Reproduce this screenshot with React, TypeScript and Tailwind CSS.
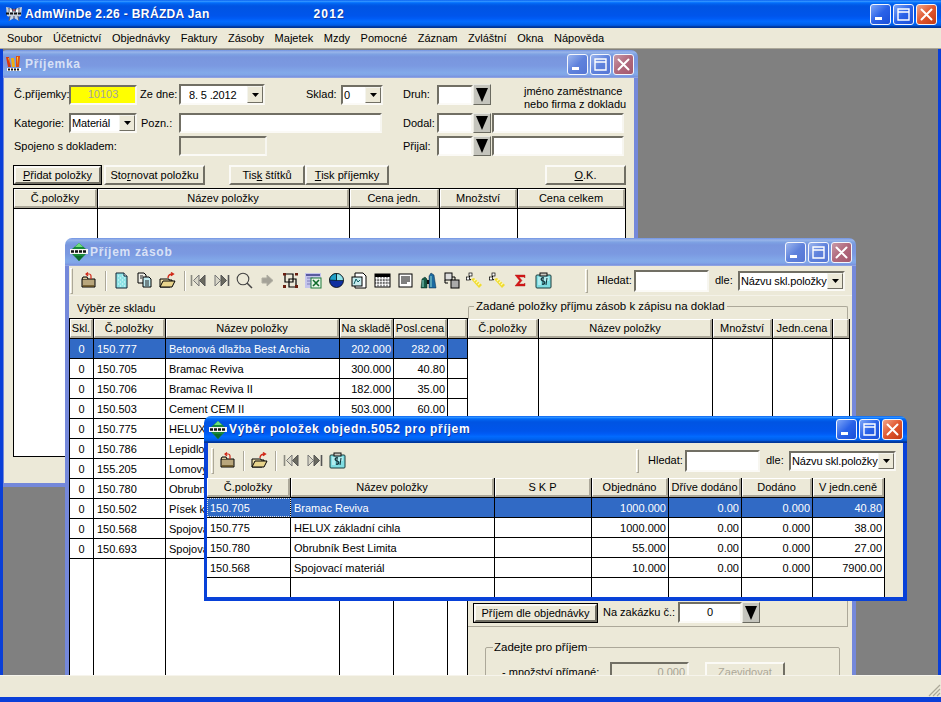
import React from "react";

const SUNKEN = "border-2 border-t-[#716f64] border-l-[#716f64] border-r-[#f7f6f0] border-b-[#fbfaf6]";
const RAISED = "border-2 border-t-[#fbfaf6] border-l-[#fbfaf6] border-r-[#716f64] border-b-[#716f64]";
const ACTIVE_TITLE = "bg-[linear-gradient(to_bottom,#0058ee_0%,#3593ff_4%,#288eff_6%,#127dff_8%,#036ffc_10%,#0262ee_14%,#0057e5_20%,#0054e3_24%,#0055eb_56%,#005bf5_66%,#026afe_76%,#0062ef_86%,#0052d6_92%,#0040ab_94%,#003092_100%)]";
const INACTIVE_TITLE = "bg-[linear-gradient(to_bottom,#7697e7_0%,#7e9ee3_3%,#94afe8_6%,#97b4e9_8%,#82a5e4_14%,#7c9fe2_17%,#7996de_25%,#7b99e1_56%,#82a9e9_81%,#80a5e7_89%,#7b96e1_94%,#7a93df_97%,#abbae3_100%)]";

function WinBtn({ kind, active }: { kind: "min" | "max" | "close"; active: boolean }) {
  const bg =
    kind === "close"
      ? active
        ? "bg-[linear-gradient(135deg,#f2a58a,#e0562e_50%,#c23a14)]"
        : "bg-[linear-gradient(135deg,#c89aa8,#b0687c_50%,#a4586e)]"
      : active
        ? "bg-[linear-gradient(135deg,#7da6f8,#2a62e8_50%,#1a4fd8)]"
        : "bg-[linear-gradient(135deg,#9cb6ee,#5f82dc_50%,#5676d4)]";
  return (
    <div className={`w-[21px] h-[21px] rounded-[3px] border border-[#f4f6fc] flex items-center justify-center ${bg}`}>
      <svg width="15" height="15" viewBox="0 0 15 15">
        {kind === "min" && <rect x="2" y="10" width="7" height="3" fill="#fff" />}
        {kind === "max" && (
          <path d="M2 2h11v11H2z M2 2v3h11V2" fill="none" stroke="#fff" strokeWidth="1.4" />
        )}
        {kind === "close" && (
          <path d="M2.5 2.5l10 10M12.5 2.5l-10 10" stroke="#fff" strokeWidth="2" strokeLinecap="round" />
        )}
      </svg>
    </div>
  );
}

function WinBtns({ active }: { active: boolean }) {
  return (
    <div className="ml-auto flex gap-[2px] mr-[4px]">
      <WinBtn kind="min" active={active} />
      <WinBtn kind="max" active={active} />
      <WinBtn kind="close" active={active} />
    </div>
  );
}

function AdmIcon() {
  return (
    <svg width="18" height="18" viewBox="0 0 18 18">
      <path d="M1 2l5 1 3 3 3-3 5-1-1 9-3 1 1 4-5-3-5 3 1-4-3-1z" fill="#c8d0dc" />
      <path d="M3 4l4 1 1 2H3zM15 4l-4 1-1 2h5z" fill="#ffffff" />
      <path d="M4 3v4M7 3l1 4M14 3v4M11 3l-1 4" stroke="#30384a" strokeWidth="0.9" />
      <path d="M1 8.5h16" stroke="#111" strokeWidth="2" strokeDasharray="3 1" />
      <path d="M5 11l-1 5M13 11l1 5M9 11v4" stroke="#566080" strokeWidth="1.2" />
      <circle cx="9" cy="5" r="1" fill="#c84040" />
    </svg>
  );
}

function ReceiptIcon() {
  return (
    <svg width="18" height="18" viewBox="0 0 18 18">
      <path d="M1 2h3l2 10h-3z" fill="#d83810" />
      <path d="M6 3h3l1 9H7z" fill="#f0b010" />
      <path d="M11 1h4l-1 11h-3z" fill="#e05010" />
      <path d="M12 2h1l-1 8z" fill="#f8e040" />
      <path d="M3 3h1l1 6z" fill="#f8c020" />
      <rect x="2" y="13" width="14" height="3" fill="#fff" />
      <path d="M3 14.5h12" stroke="#111" strokeWidth="1.8" strokeDasharray="2 1" />
    </svg>
  );
}

function GreenIcon() {
  return (
    <svg width="18" height="18" viewBox="0 0 18 18">
      <path d="M9 0l7 6v5l-7 7-7-7V6z" fill="#18883a" />
      <path d="M9 0l4 4H5z" fill="#6ee07c" />
      <path d="M9 18l4-5H5z" fill="#0c6a2c" />
      <rect x="0" y="6" width="18" height="5" fill="#f6f6f2" />
      <path d="M1 8.5h16" stroke="#111" strokeWidth="2.6" strokeDasharray="3 1" />
    </svg>
  );
}

function Title({ text, active, icon, main }: { text: string; active: boolean; icon: React.ReactNode; main?: boolean }) {
  return (
    <div className="flex items-center shrink-0 h-full pl-[5px]">
      {icon}
      <span className={`ml-[2px] font-bold text-[12px] whitespace-pre ${main ? "tracking-[0.35px]" : "tracking-[0.7px]"} ${active ? "text-white [text-shadow:1px_1px_0_#0f3fa8]" : "text-[#d8e1f6]"}`}>
        {text}
      </span>
    </div>
  );
}

function Win({
  pos,
  title,
  active,
  icon,
  titleH,
  children,
}: {
  pos: string;
  title: string;
  active: boolean;
  icon: React.ReactNode;
  titleH: string;
  children: React.ReactNode;
}) {
  return (
    <div className={`absolute flex flex-col rounded-t-[7px] overflow-hidden ${pos}`}>
      <div className={`${titleH} shrink-0 flex items-center ${active ? ACTIVE_TITLE : INACTIVE_TITLE}`}>
        <Title text={title} active={active} icon={icon} />
        <WinBtns active={active} />
      </div>
      <div className={`flex-1 min-h-0 bg-[#ece9d8] border-x-[4px] border-b-[4px] ${active ? "border-[#0841d8]" : "border-[#7488da]"}`}>
        {children}
      </div>
    </div>
  );
}

function Tri({ w, h }: { w: number; h: number }) {
  return (
    <svg width={w} height={h} viewBox="0 0 10 10" preserveAspectRatio="none">
      <polygon points="0,0 10,0 5,10" fill="#000" />
    </svg>
  );
}

function Combo({ w, h, text, align }: { w: string; h: string; text: string; align?: string }) {
  return (
    <div className={`${w} ${h} ${SUNKEN} bg-white flex items-center shrink-0`}>
      <span className={`flex-1 min-w-0 whitespace-nowrap overflow-hidden pl-[1px] pt-[1px] tracking-[-0.15px] ${align ?? ""}`}>{text}</span>
      <div className="w-[16px] h-full bg-[#ece9d8] border border-t-[#f4f4ee] border-l-[#f4f4ee] border-r-[#716f64] border-b-[#716f64] flex items-center justify-center shrink-0">
        <Tri w={7} h={4} />
      </div>
    </div>
  );
}

function Dropper({ h }: { h: string }) {
  return (
    <div className={`w-[18px] ${h} shrink-0 bg-[#c4c4bc] border border-t-[#e8e8e0] border-l-[#e8e8e0] border-r-[#6a6a60] border-b-[#6a6a60] flex items-center justify-center`}>
      <Tri w={12} h={14} />
    </div>
  );
}

function Inp({ cls, children }: { cls: string; children?: React.ReactNode }) {
  return <div className={`${SUNKEN} shrink-0 flex items-center ${cls}`}>{children}</div>;
}

function Btn({ cls, children, def }: { cls: string; children: React.ReactNode; def?: boolean }) {
  return (
    <div className={`h-[20px] shrink-0 flex items-center justify-center bg-[#ece9d8] ${def ? "border border-black" : ""} ${cls}`}>
      <div className={`w-full h-full flex items-center justify-center pt-[1px] ${RAISED}`}>{children}</div>
    </div>
  );
}

type Cell = { t: string; a?: "l" | "r" | "c" };

function Grid({
  cols,
  headers,
  rows,
  selected,
  cls,
  focusFirst,
}: {
  cols: string;
  headers: string[];
  rows: Cell[][];
  selected?: number;
  cls: string;
  focusFirst?: boolean;
}) {
  return (
    <div className={`flex flex-col overflow-hidden ${cls}`}>
      <div className={`grid ${cols} h-[20px] shrink-0 border-b border-black bg-[#ece9d8]`}>
        {headers.map((h, i) => (
          <div key={i} className="flex items-center justify-center whitespace-nowrap overflow-hidden border-r border-black">
            <div className="w-full h-full flex items-center justify-center pt-[1px] border-t border-l border-t-[#fff] border-l-[#fff] border-b-2 border-r-2 border-b-[#aca899] border-r-[#aca899]">
              {h}
            </div>
          </div>
        ))}
      </div>
      {rows.map((r, ri) => (
        <div
          key={ri}
          className={`grid ${cols} h-[20px] shrink-0 border-b border-black ${selected === ri ? "bg-[#316ac5] text-white" : "bg-white text-black"}`}
        >
          {r.map((c, ci) => (
            <div
              key={ci}
              className={`flex items-center whitespace-nowrap overflow-hidden border-r border-black pt-[1px] px-[3px] ${c.a === "r" ? "justify-end pr-[2px]" : c.a === "c" ? "justify-center" : "justify-start"} ${focusFirst && selected === ri && ci === 0 ? "outline-1 -outline-offset-1 outline-dotted outline-[#e4e4e4]" : ""}`}
            >
              {c.t}
            </div>
          ))}
        </div>
      ))}
      <div className={`grid ${cols} flex-1 min-h-0 bg-white`}>
        {headers.map((_, i) => (
          <div key={i} className="border-r border-black" />
        ))}
      </div>
    </div>
  );
}

/* ---------- toolbar icons ---------- */
const I = ({ children }: { children: React.ReactNode }) => (
  <div className="w-[23px] h-[20px] flex items-center justify-center shrink-0">
    <svg width="17" height="17" viewBox="0 0 17 17">
      {children}
    </svg>
  </div>
);
const Sep = ({ cls }: { cls: string }) => <div className={`w-[1px] h-[20px] bg-[#aca899] shrink-0 shadow-[1px_0_0_#fff] ${cls}`} />;
const Gripper = ({ cls }: { cls: string }) => (
  <div className={`w-[3px] shrink-0 bg-[#ece9d8] border border-t-[#fff] border-l-[#fff] border-r-[#aca899] border-b-[#aca899] ${cls}`} />
);

const IcBack = () => (
  <I>
    <path d="M2 7h13v8H2z" fill="#b8a67c" stroke="#000" />
    <path d="M2 7l1-2h4l1 2" fill="#d8c99c" stroke="#000" />
    <path d="M3 14h11" stroke="#5d4a1c" strokeWidth="1.4" />
    <path d="M11 7V4a2 2 0 0 0-2-2H6m2-1.5L6 2l2 2" fill="none" stroke="#d02818" strokeWidth="1.2" />
  </I>
);
const IcPage = () => (
  <I>
    <path d="M3 1h8l3 3v12H3z" fill="#8fe3e6" stroke="#123" />
    <path d="M11 1v3h3" fill="#fff" stroke="#123" />
    <path d="M5 4h1M7 6h1M9 4h1M5 8h1M9 8h1M7 10h1M11 6h1M11 10h1M5 12h1M9 12h1M7 14h1M11 14h1" stroke="#e6fbfb" />
  </I>
);
const IcCopy = () => (
  <I>
    <path d="M2 1h6l2 2v8H2z" fill="#f0f0e8" stroke="#000" />
    <path d="M7 5h6l2 2v8H7z" fill="#bfe9ee" stroke="#000" />
    <path d="M4 4h3M4 6h2M9 9h4M9 11h4M9 13h4" stroke="#222" />
  </I>
);
const IcOpen = () => (
  <I>
    <path d="M1 7h9v1h3v1L11 15H1z" fill="#f0e2ae" stroke="#000" />
    <path d="M1 15l3-6h12l-3 6z" fill="#e8d48c" stroke="#000" />
    <path d="M9 6c0-3 2-4 5-4m-2-1.5L14.5 2 12 3.8" fill="none" stroke="#d02818" strokeWidth="1.3" />
  </I>
);
const IcFirst = () => (
  <I>
    <path d="M1.5 3v11" stroke="#8a8a80" strokeWidth="1.6" />
    <path d="M9 3L3.5 8.5 9 14z" fill="#d8d6c8" stroke="#777" strokeWidth="1" />
    <path d="M15 3L9.5 8.5 15 14z" fill="#6a6a60" stroke="#555" />
  </I>
);
const IcLast = () => (
  <I>
    <path d="M2 3l5.5 5.5L2 14z" fill="#d8d6c8" stroke="#777" strokeWidth="1" />
    <path d="M8 3l5.5 5.5L8 14z" fill="#6a6a60" stroke="#555" />
    <path d="M15.5 3v11" stroke="#555" strokeWidth="1.6" />
  </I>
);
const IcSearch = () => (
  <I>
    <circle cx="7" cy="7" r="5.8" fill="none" stroke="#444" strokeWidth="1.1" />
    <path d="M11 11l5 5" stroke="#444" strokeWidth="1.5" />
  </I>
);
const IcArrow = () => (
  <I>
    <path d="M3 6h5V3l6 5.5L8 14v-3H3z" fill="#a4a298" stroke="#b0aea2" />
  </I>
);
const IcFrame = () => (
  <I>
    <path d="M3 2h8v8H3zM7 7h7v8H7z" fill="none" stroke="#000" strokeWidth="1.2" />
    <path d="M1 1h3v2.5H1zM13 1h3v2.5h-3zM1 13h3v3H1zM13 13h3v3h-3z" fill="#6a1f10" />
  </I>
);
const IcExcel = () => (
  <I>
    <rect x="0" y="1" width="16" height="15" fill="#c4c4ec" />
    <rect x="1" y="2" width="14" height="2" fill="#5a5aa0" />
    <path d="M2 6h6M2 9h4M2 12h4" stroke="#7a7ab8" />
    <rect x="6" y="6" width="10" height="10" fill="#e8f4e8" stroke="#1f7a3a" />
    <path d="M8 8l6 6M14 8l-6 6" stroke="#0f6a2a" strokeWidth="1.6" />
  </I>
);
const IcPie = () => (
  <I>
    <circle cx="8.5" cy="8.5" r="7" fill="#1030a0" stroke="#000" strokeWidth="0.8" />
    <path d="M8.5 8.5V1.5a7 7 0 0 1 7 7z" fill="#8fe3ea" stroke="#000" strokeWidth="0.6" />
    <path d="M8.5 8.5l-7-0.5a7 7 0 0 1 7-6.5z" fill="#1ea0c8" stroke="#000" strokeWidth="0.6" />
  </I>
);
const IcDoc = () => (
  <I>
    <path d="M4 1h8l3 3v12H4z" fill="#fff" stroke="#000" />
    <rect x="1" y="5" width="10" height="9" fill="#c8ecee" stroke="#000" />
    <path d="M3 12l2-5 2 3 2-2" fill="none" stroke="#0a5a60" />
  </I>
);
const IcCal = () => (
  <I>
    <rect x="1" y="2" width="15" height="13" fill="#fff" stroke="#000" />
    <rect x="1" y="2" width="15" height="3" fill="#000" />
    <path d="M4 5v10M7 5v10M10 5v10M13 5v10M1 8h15M1 11h15" stroke="#000" strokeWidth="0.8" strokeDasharray="1 0.6" />
  </I>
);
const IcLines = () => (
  <I>
    <rect x="2" y="2" width="13" height="13" fill="#fff" stroke="#000" />
    <path d="M4 5h9M4 7h9M4 9h9M4 11h6" stroke="#000" />
  </I>
);
const IcBino = () => (
  <I>
    <path d="M1 16l1-9 3-2 2 2v9z" fill="#155a46" stroke="#0a2a26" strokeWidth="0.5" />
    <path d="M9 16V4l2-3 3 2 2 13z" fill="#1c6aa0" stroke="#0a2a46" strokeWidth="0.5" />
    <path d="M3 8v7M11 4v11" stroke="#8fdad0" />
    <rect x="7" y="8" width="2" height="4" fill="#111" />
  </I>
);
const IcShapes = () => (
  <I>
    <rect x="2" y="1" width="7" height="7" fill="#ddd" stroke="#000" />
    <rect x="8" y="8" width="8" height="8" fill="#aaa" stroke="#000" />
    <path d="M9 5h3v3M2 8v3h3" fill="none" stroke="#000" />
  </I>
);
const IcTree = () => (
  <I>
    <path d="M5 3L2 6l3 2" fill="none" stroke="#000" />
    <rect x="3" y="1" width="3" height="3" fill="#fff" stroke="#000" strokeWidth="0.7" />
    <rect x="0.5" y="5" width="3" height="3" fill="#fff" stroke="#000" strokeWidth="0.7" />
    <path d="M5 7l3-1 8 7-3 3z" fill="#f0dc30" />
    <path d="M8 9l2-2M10 11l2-2M12 13l2-2" stroke="#fff8b0" strokeWidth="1.2" />
  </I>
);
const IcSigma = () => (
  <I>
    <path d="M3 3h10v3l-1-1H7l3 3.5L7 12h5l1-1v3H3l4.5-5.5z" fill="#d81818" stroke="#a81010" strokeWidth="0.4" />
  </I>
);
const IcClip = () => (
  <I>
    <rect x="1" y="3" width="15" height="13" rx="1" fill="#7fdde2" stroke="#1a3a3a" />
    <rect x="5" y="1" width="7" height="3" fill="#c8c8c0" stroke="#111" />
    <path d="M3 6h11M3 8h11M3 10h3M3 12h3" stroke="#e4fbfb" />
    <path d="M9 6c-3-1-4 2-1 3s2 4-1 3" fill="none" stroke="#12323a" strokeWidth="1.2" />
    <path d="M8 5v8M12 6l-1 7" stroke="#12323a" />
  </I>
);

function SearchGroup() {
  return (
    <div className="ml-auto mr-[7px] flex items-center h-full shrink-0">
      <Gripper cls="h-[24px]" />
      <span className="ml-[9px] w-[37px]">Hledat:</span>
      <Inp cls="w-[75px] h-[22px] bg-white" />
      <span className="ml-[6px] w-[23px]">dle:</span>
      <Combo w="w-[107px]" h="h-[20px]" text="Názvu skl.položky" />
    </div>
  );
}

const stock: string[][] = [
  ["150.777", "Betonová dlažba Best Archia", "202.000", "282.00"],
  ["150.705", "Bramac Reviva", "300.000", "40.80"],
  ["150.706", "Bramac Reviva II", "182.000", "35.00"],
  ["150.503", "Cement CEM II", "503.000", "60.00"],
  ["150.775", "HELUX", "", ""],
  ["150.786", "Lepidlo", "", ""],
  ["155.205", "Lomový", "", ""],
  ["150.780", "Obrubník", "", ""],
  ["150.502", "Písek k", "", ""],
  ["150.568", "Spojovací", "", ""],
  ["150.693", "Spojovací", "", ""],
];

const ordered: string[][] = [
  ["150.705", "Bramac Reviva", "", "1000.000", "0.00", "0.000", "40.80"],
  ["150.775", "HELUX základní cihla", "", "1000.000", "0.00", "0.000", "38.00"],
  ["150.780", "Obrubník Best Limita", "", "55.000", "0.00", "0.000", "27.00"],
  ["150.568", "Spojovací materiál", "", "10.000", "0.00", "0.000", "7900.00"],
];

export default function App() {
  return (
    <div className="w-[941px] h-[702px] overflow-hidden flex flex-col bg-[#0a3fd8] font-['Liberation_Sans',Arial,sans-serif] text-[11px] leading-[13px] text-black">
      {/* main title */}
      <div className={`h-[28px] shrink-0 flex items-center ${ACTIVE_TITLE}`}>
        <Title text="AdmWinDe 2.26 - BRÁZDA Jan" active icon={<AdmIcon />} main />
        <span className="ml-[104px] font-bold text-[12px] tracking-[1.1px] text-white [text-shadow:1px_1px_0_#0f3fa8]">2012</span>
        <WinBtns active />
      </div>
      {/* menu */}
      <div className="h-[21px] shrink-0 bg-[#ece9d8] flex items-center pl-[7px] gap-[10.6px] border-b border-[#aca899]">
        {["Soubor", "Účetnictví", "Objednávky", "Faktury", "Zásoby", "Majetek", "Mzdy", "Pomocné", "Záznam", "Zvláštní", "Okna", "Nápověda"].map((m) => (
          <span key={m}>{m}</span>
        ))}
      </div>
      {/* MDI */}
      <div className="flex-1 min-h-0 mx-[3px] relative overflow-hidden bg-[#808080]">
        {/* Příjemka */}
        <Win pos="left-[-3px] top-[1px] w-[638px] h-[437px]" title="Příjemka" active={false} icon={<ReceiptIcon />} titleH="h-[28px]">
          <div className="pt-[6px] pl-[10px] flex flex-col">
            <div className="flex items-center h-[21px]">
              <span className="w-[55px] whitespace-nowrap">Č.příjemky:</span>
              <Inp cls="w-[68px] h-[20px] bg-[#ffff00] justify-center text-[#a4a4a0]">10103</Inp>
              <span className="ml-[3px] w-[39px]">Ze dne:</span>
              <Combo w="w-[86px]" h="h-[21px]" text="8. 5 .2012" align="pl-[8px]" />
              <span className="ml-[41px] w-[35px]">Sklad:</span>
              <Combo w="w-[42px]" h="h-[20px]" text="0" />
              <span className="ml-[20px] w-[34px]">Druh:</span>
              <Inp cls="w-[36px] h-[20px] bg-white" />
              <Dropper h="h-[21px]" />
              <span className="ml-[33px] self-start pt-[1px] whitespace-nowrap">jméno zaměstnance<br />nebo firma z dokladu</span>
            </div>
            <div className="flex items-center h-[20px] mt-[8px]">
              <span className="w-[55px]">Kategorie:</span>
              <Combo w="w-[68px]" h="h-[20px]" text="Materiál" />
              <span className="ml-[4px] w-[38px]">Pozn.:</span>
              <Inp cls="w-[203px] h-[20px] bg-white" />
              <span className="ml-[21px] w-[34px]">Dodal:</span>
              <Inp cls="w-[36px] h-[20px] bg-white" />
              <Dropper h="h-[20px]" />
              <Inp cls="ml-[1px] w-[132px] h-[20px] bg-white" />
            </div>
            <div className="flex items-center h-[20px] mt-[3px]">
              <span className="w-[165px]">Spojeno s dokladem:</span>
              <Inp cls="w-[88px] h-[20px] bg-[#ece9d8]" />
              <span className="ml-[136px] w-[34px]">Přijal:</span>
              <Inp cls="w-[36px] h-[20px] bg-white" />
              <Dropper h="h-[20px]" />
              <Inp cls="ml-[1px] w-[132px] h-[20px] bg-white" />
            </div>
            <div className="flex items-center h-[20px] mt-[9px] ml-[-1px]">
              <Btn cls="w-[89px]" def><span><u>P</u>řidat položky</span></Btn>
              <Btn cls="ml-[2px] w-[101px]"><span>Sto<u>r</u>novat položku</span></Btn>
              <Btn cls="ml-[24px] w-[76px]"><span>Tis<u>k</u> štítků</span></Btn>
              <Btn cls="w-[84px]"><span><u>T</u>isk příjemky</span></Btn>
              <Btn cls="ml-[156px] w-[81px]"><span><u>O</u>.K.</span></Btn>
            </div>
            <Grid
              cls="ml-[-1px] mt-[3px] w-[613px] h-[269px] border border-r-0 border-black"
              cols="grid-cols-[84px_252px_90px_78px_108px]"
              headers={["Č.položky", "Název položky", "Cena jedn.", "Množství", "Cena celkem"]}
              rows={[]}
            />
          </div>
        </Win>

        {/* Příjem zásob */}
        <Win pos="left-[62px] top-[189px] w-[791px] h-[600px]" title="Příjem zásob" active={false} icon={<GreenIcon />} titleH="h-[28px]">
          <div className="h-[30px] flex items-center border-b border-[#f4f2e8]">
            <Gripper cls="h-[26px] ml-[1px]" />
            <div className="ml-[4px]"><IcBack /></div>
            <Sep cls="ml-[5px]" />
            <div className="ml-[4px]"><IcPage /></div>
            <IcCopy />
            <IcOpen />
            <Sep cls="ml-[5px]" />
            <div className="ml-[2px]"><IcFirst /></div>
            <IcLast />
            <IcSearch />
            <IcArrow />
            <IcFrame />
            <IcExcel />
            <IcPie />
            <IcDoc />
            <IcCal />
            <IcLines />
            <IcBino />
            <IcShapes />
            <IcTree />
            <IcTree />
            <IcSigma />
            <IcClip />
            <SearchGroup />
          </div>
          <div className="flex">
            <div className="w-[399px] shrink-0 flex flex-col">
              <div className="h-[22px] pl-[8px] pt-[6px]">Výběr ze skladu</div>
              <Grid
                cls="w-[399px] h-[360px] border-t border-l border-black"
                cols="grid-cols-[24px_72px_174px_54px_54px_20px]"
                headers={["Skl.", "Č.položky", "Název položky", "Na skladě", "Posl.cena", ""]}
                rows={stock.map((s) => [
                  { t: "0", a: "c" as const },
                  { t: s[0] },
                  { t: s[1] },
                  { t: s[2], a: "r" as const },
                  { t: s[3], a: "r" as const },
                  { t: "" },
                ])}
                selected={0}
              />
            </div>
            <div className="flex-1 min-w-0 flex flex-col">
              <fieldset className="mt-[4px] h-[19px] border border-b-0 border-[#aca899] mr-[4px] pl-[5px] rounded-t-[2px]">
                <legend className="px-[2px] leading-[13px] text-[11.5px]">Zadané položky příjmu zásob k zápisu na doklad</legend>
              </fieldset>
              <Grid
                cls="w-[382px] h-[280px]"
                cols="grid-cols-[71px_174px_60px_60px_17px]"
                headers={["Č.položky", "Název položky", "Množství", "Jedn.cena", ""]}
                rows={[]}
              />
              <div className="h-[28px] w-[380px] flex items-center border-b border-r border-[#aca899] pl-[5px] shrink-0">
                <Btn cls="w-[125px]" def><span>Příjem dle objednávky</span></Btn>
                <span className="ml-[5px] w-[75px] whitespace-nowrap">Na zakázku č.:</span>
                <Inp cls="w-[64px] h-[21px] bg-white justify-center">0</Inp>
                <Dropper h="h-[21px]" />
              </div>
              <fieldset className="ml-[17px] mt-[14px] w-[355px] h-[80px] border border-[#aca899] rounded-[2px] pl-[7px]">
                <legend className="px-[1px] leading-[13px] text-[11.5px]">Zadejte pro příjem</legend>
                <div className="flex items-center h-[20px] mt-[8px]">
                  <span className="ml-[9px] w-[108px] whitespace-nowrap">- množství přímané:</span>
                  <Inp cls="w-[79px] h-[20px] bg-[#ece9d8] justify-end pr-[2px] text-[#a4a294]">0.000</Inp>
                  <div className={`ml-[16px] w-[80px] h-[20px] flex items-center justify-center text-[#aca899] ${RAISED}`}>Zaevidovat</div>
                </div>
              </fieldset>
            </div>
          </div>
        </Win>

        {/* Výběr položek */}
        <Win pos="left-[201px] top-[367px] w-[703px] h-[185px]" title="Výběr položek objedn.5052 pro příjem" active icon={<GreenIcon />} titleH="h-[27px]">
          <div className="h-[35px] flex items-center">
            <Gripper cls="h-[26px] ml-[3px]" />
            <div className="ml-[2px]"><IcBack /></div>
            <Sep cls="ml-[4px]" />
            <div className="ml-[4px]"><IcOpen /></div>
            <Sep cls="ml-[4px]" />
            <div className="ml-[4px]"><IcFirst /></div>
            <IcLast />
            <IcClip />
            <SearchGroup />
          </div>
          <Grid
            cls="ml-[-1px] h-[119px] w-[678px]"
            cols="grid-cols-[84px_204px_97px_77px_73px_71px_72px]"
            headers={["Č.položky", "Název položky", "S K P", "Objednáno", "Dříve dodáno", "Dodáno", "V jedn.ceně"]}
            rows={ordered.map((r) => [
              { t: r[0] },
              { t: r[1] },
              { t: r[2] },
              { t: r[3], a: "r" as const },
              { t: r[4], a: "r" as const },
              { t: r[5], a: "r" as const },
              { t: r[6], a: "r" as const },
            ])}
            selected={0}
            focusFirst
          />
        </Win>
      </div>
      {/* status bar */}
      <div className="h-[22px] shrink-0 bg-[#ece9d8] border-t border-[#f6f4ec] flex justify-end items-end">
        <svg width="13" height="13" viewBox="0 0 13 13">
          <path d="M12 1L1 12M12 5L5 12M12 9L9 12" stroke="#aca899" strokeWidth="1.2" />
        </svg>
      </div>
      <div className="h-[5px] shrink-0 bg-[#0a3fd8]" />
    </div>
  );
}
